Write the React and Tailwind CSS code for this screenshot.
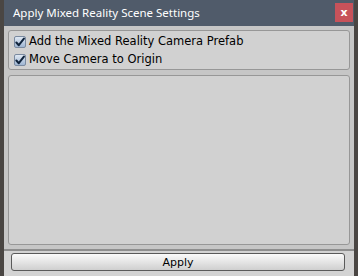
function CheckRow({ label }) {
  return (
    <label className="flex items-center h-[18px] gap-[3px]">
      <span className="w-[12px] h-[12px] rounded-[2px] border border-[#7a8aa0] bg-gradient-to-b from-[#dfe8f3] to-[#9fb6d3] flex items-center justify-center">
        <svg width="11" height="11" viewBox="0 0 11 11">
          <path d="M1.5 5.5 L4.2 8.5 L9.8 1.2" fill="none" stroke="#10243c" strokeWidth="2.2" strokeLinecap="round" strokeLinejoin="round" />
        </svg>
      </span>
      <span className="text-[11.5px] text-black leading-none">{label}</span>
    </label>
  );
}

export default function App() {
  return (
    <div className="w-[358px] h-[276px] bg-[#4a4643] px-[4px] flex" style={{ fontFamily: '"DejaVu Sans", Verdana, sans-serif' }}>
      <div className="flex-1 flex flex-col">
        {/* Title bar */}
        <div className="h-[26px] bg-[#505b6a] flex items-center justify-between pl-[9px] pr-[1px]">
          <span className="text-[11.5px] text-white" style={{ fontFamily: '"Noto Sans", "Open Sans", sans-serif' }}>
            Apply Mixed Reality Scene Settings
          </span>
          <button className="w-[18px] h-[19px] mb-[1px] bg-[#c7525a] text-white text-[11px] font-bold leading-none flex items-center justify-center">
            x
          </button>
        </div>

        {/* Body */}
        <div className="flex-1 bg-[#c6c6c6] flex flex-col px-[4px] pt-[4px]">
          <div className="h-[40px] rounded-[3px] border border-[#979797] bg-[#d1d1d1] pl-[5px] pt-[2px] flex flex-col">
            <CheckRow label="Add the Mixed Reality Camera Prefab" />
            <CheckRow label="Move Camera to Origin" />
          </div>
          <div className="h-[170px] mt-[5px] rounded-[3px] border border-[#979797] bg-[#d1d1d1]" />
        </div>

        {/* Footer */}
        <div className="h-[27px] bg-[#d3d3d3] border-t-[2px] border-[#8e8e8e] px-[7px] pt-[2px] flex items-start">
          <button className="w-[334px] h-[18px] rounded-[3px] border border-[#5a5a5a] bg-gradient-to-b from-[#fbfbfb] to-[#cfcfcf] text-[11px] text-black leading-none">
            Apply
          </button>
        </div>
      </div>
    </div>
  );
}
